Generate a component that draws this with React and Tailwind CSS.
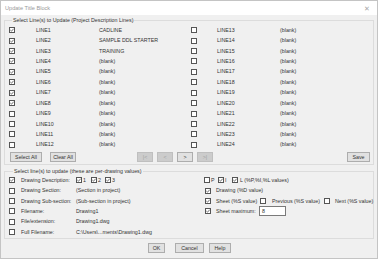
import React from 'react';

const left = [
  ['LINE1', 'CADLINE', true],
  ['LINE2', 'SAMPLE DDL STARTER', true],
  ['LINE3', 'TRAINING', true],
  ['LINE4', '(blank)', true],
  ['LINE5', '(blank)', true],
  ['LINE6', '(blank)', true],
  ['LINE7', '(blank)', true],
  ['LINE8', '(blank)', true],
  ['LINE9', '(blank)', false],
  ['LINE10', '(blank)', false],
  ['LINE11', '(blank)', false],
  ['LINE12', '(blank)', false],
];

const right = Array.from({ length: 12 }, (_, i) => [`LINE${i + 13}`, '(blank)', false]);

const perDrawing = [
  ['Drawing Description:', null, true],
  ['Drawing Section:', '(Section in project)', false],
  ['Drawing Sub-section:', '(Sub-section in project)', false],
  ['Filename:', 'Drawing1', false],
  ['File/extension:', 'Drawing1.dwg', false],
  ['Full Filename:', 'C:\\Users\\...ments\\Drawing1.dwg', false],
];

function Check({ on }) {
  return (
    <svg width="6" height="6" viewBox="0 0 6 6" className="shrink-0">
      <rect x="0.5" y="0.5" width="5" height="5" fill="#fff" stroke="#555" />
      {on && <path d="M1.3 3 L2.5 4.2 L4.7 1.7" fill="none" stroke="#333" strokeWidth="0.7" />}
    </svg>
  );
}

function Btn({ children, className = '', disabled }) {
  return (
    <div
      className={`h-[10px] flex items-center justify-center border whitespace-nowrap ${
        disabled ? 'bg-[#cccccc] border-[#bfbfbf] text-[#a0a0a0]' : 'bg-[#e1e1e1] border-[#adadad] text-[#333]'
      } ${className}`}
    >
      {children}
    </div>
  );
}

function LineRow({ row, first, second }) {
  const [name, value, on] = row;
  return (
    <div className="h-[10.43px] flex items-center whitespace-nowrap">
      <div className={first}><Check on={on} /></div>
      <div className={second}>{name}</div>
      <div>{value}</div>
    </div>
  );
}

export default function App() {
  return (
    <div className="w-[378px] h-[259px] flex flex-col border border-[#c4c4c4] bg-[#f0f0f0] text-[5.3px] leading-[7px] text-[#333] font-['Liberation_Sans',Arial,sans-serif] overflow-hidden">
      {/* title bar */}
      <div className="h-[14px] bg-white flex items-center justify-between pl-[4px] pr-[7px] shrink-0">
        <span className="text-[5.6px] text-[#9a9a9a]">Update Title Block</span>
        <span className="text-[7px] text-[#a8a8a8]">✕</span>
      </div>

      <div className="flex flex-col px-[3px]">
        {/* group 1 */}
        <fieldset className="mt-[2px] w-[370px] border border-[#dcdcdc] pl-[3px] pr-[3px] pb-[2px]">
          <legend className="ml-[4px] px-[1px]">Select Line(s) to Update (Project Description Lines)</legend>
          <div className="flex pt-[1px]">
            <div className="w-[183px] flex flex-col pl-[1px]">
              {left.map((r) => (
                <LineRow key={r[0]} row={r} first="w-[27px]" second="w-[63px]" />
              ))}
            </div>
            <div className="flex flex-col">
              {right.map((r) => (
                <LineRow key={r[0]} row={r} first="w-[26px]" second="w-[63px]" />
              ))}
            </div>
          </div>
          <div className="flex items-center mt-[2px] pl-[2px]">
            <Btn className="w-[32px]">Select All</Btn>
            <Btn className="w-[26px] ml-[8px]">Clear All</Btn>
            <Btn className="w-[16px] ml-[61px]" disabled>|&lt;</Btn>
            <Btn className="w-[16px] ml-[4px]" disabled>&lt;</Btn>
            <Btn className="w-[16px] ml-[4px]">&gt;</Btn>
            <Btn className="w-[16px] ml-[4px]" disabled>&gt;|</Btn>
            <Btn className="w-[23px] ml-auto">Save</Btn>
          </div>
        </fieldset>

        {/* group 2 */}
        <fieldset className="mt-[3px] w-[370px] border border-[#dcdcdc] pl-[4px] pb-[1px]">
          <legend className="ml-[4px] px-[1px]">Select line(s) to update (these are per-drawing values)</legend>
          <div className="flex whitespace-nowrap">
            <div className="w-[195px] shrink-0 flex flex-col">
              {perDrawing.map(([label, value, on]) => (
                <div key={label} className="h-[10.4px] flex items-center">
                  <div className="w-[12px]"><Check on={on} /></div>
                  <div className="w-[55px]">{label}</div>
                  {value ? (
                    <div>{value}</div>
                  ) : (
                    <div className="flex items-center">
                      <Check on /><span className="ml-[1px] w-[8px]">1</span>
                      <Check on /><span className="ml-[1px] w-[7px]">2</span>
                      <Check on /><span className="ml-[1px]">3</span>
                    </div>
                  )}
                </div>
              ))}
            </div>
            <div className="flex flex-col">
              <div className="h-[10.4px] flex items-center">
                <Check /><span className="ml-[1px] w-[7px]">P</span>
                <Check on /><span className="ml-[1px] w-[7px]">I</span>
                <Check on /><span className="ml-[2px]">L (%P,%I,%L values)</span>
              </div>
              <div className="h-[10.4px] flex items-center pl-[1px]">
                <Check on /><span className="ml-[5px]">Drawing (%D value)</span>
              </div>
              <div className="h-[10.4px] flex items-center pl-[1px]">
                <Check on /><span className="ml-[5px] w-[44px]">Sheet (%S value)</span>
                <Check /><span className="ml-[6px] w-[52px]">Previous (%S value)</span>
                <Check /><span className="ml-[5px]">Next (%S value)</span>
              </div>
              <div className="h-[10.4px] flex items-center pl-[1px]">
                <Check on /><span className="ml-[5px] w-[43px]">Sheet maximum:</span>
                <div className="w-[27px] h-[10px] bg-white border border-[#7a7a7a] flex items-center pl-[2px]">8</div>
              </div>
            </div>
          </div>
        </fieldset>

        {/* dialog buttons */}
        <div className="flex items-center mt-[4px] pl-[144px]">
          <Btn className="w-[17px]">OK</Btn>
          <Btn className="w-[29px] ml-[10px]">Cancel</Btn>
          <Btn className="w-[22px] ml-[5px]">Help</Btn>
        </div>
      </div>
    </div>
  );
}
